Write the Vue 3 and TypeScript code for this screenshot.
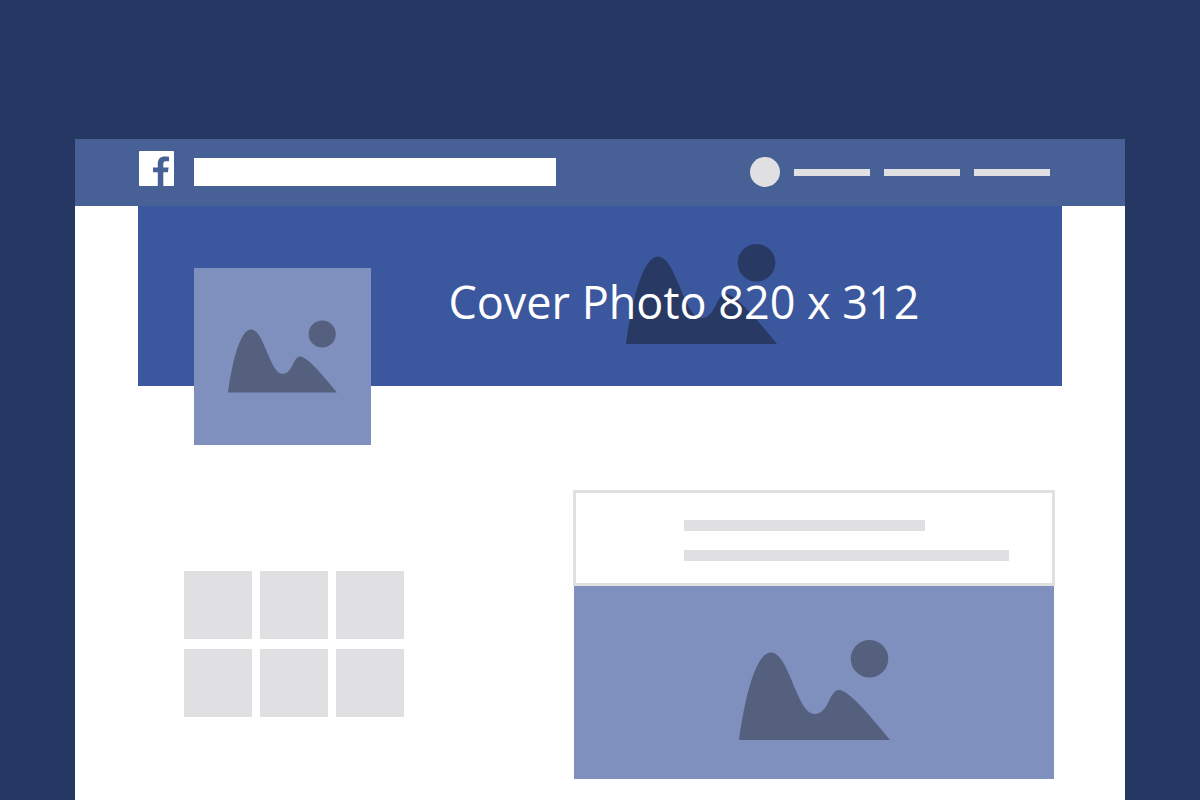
<script setup lang="ts">
import { defineComponent, h } from 'vue'

interface Line {
  id: string
  label: string
}

const links: Line[] = [
  { id: 'profile', label: 'Profile' },
  { id: 'home', label: 'Home' },
  { id: 'friends', label: 'Friends' },
]

const tiles: number[] = [1, 2, 3, 4, 5, 6]

// Placeholder landscape: two hills and a sun, filled with the current text colour.
const Landscape = defineComponent({
  render: () =>
    h('svg', { viewBox: '0 0 151 100', fill: 'currentColor', 'aria-hidden': 'true' }, [
      h('path', {
        d: 'M0 100C7 50 18 12.5 32 12.5C50 12.5 58 74 75.5 74C90 74 90 50 100 50C110 50 133 78 151 100Z',
      }),
      h('circle', { cx: 130.5, cy: 18.8, r: 18.8 }),
    ]),
})
</script>

<template>
  <div class="page">
    <div class="window">
      <header class="bar">
        <a class="logo" href="#" aria-label="Facebook">
          <svg viewBox="0 0 35 35" aria-hidden="true">
            <rect width="35" height="35" rx="1" fill="#fff" />
            <path
              d="M18.8 35V21.3H14V16.6H18.8V12.6C18.8 8 21.5 5.5 25.8 5.5C27.6 5.5 29.3 5.6 30 5.8V10.2H27C24.8 10.2 24.3 11.3 24.3 13V16.6H29.6L28.9 21.3H24.3V35Z"
              fill="#476096"
            />
          </svg>
        </a>
        <input class="search" type="search" aria-label="Search" />
        <nav class="nav">
          <span class="user"></span>
          <a v-for="link in links" :key="link.id" class="link" href="#" :aria-label="link.label"></a>
        </nav>
      </header>

      <section class="cover">
        <Landscape class="cover-art" />
        <h1 class="title">Cover Photo 820 x 312</h1>
      </section>

      <main class="body">
        <div class="side">
          <div class="avatar"><Landscape class="avatar-art" /></div>
          <div class="tiles">
            <div v-for="tile in tiles" :key="tile" class="tile"></div>
          </div>
        </div>
        <article class="post">
          <div class="post-text">
            <div class="text-line short"></div>
            <div class="text-line"></div>
          </div>
          <div class="post-media"><Landscape class="media-art" /></div>
        </article>
      </main>
    </div>
  </div>
</template>

<style>
body {
  margin: 0;
  background: #263763;
}
</style>

<style scoped>
.page {
  box-sizing: border-box;
  min-height: 100vh;
  display: flex;
  flex-direction: column;
  padding: 139px 75px 0;
  background: #263763;
  font-family: 'Open Sans', 'Noto Sans', sans-serif;
}
.window {
  flex: 1;
  background: #fff;
}
.bar {
  display: flex;
  align-items: center;
  height: 66px;
  padding: 0 75px 1px 64px;
  background: #476096;
}
.logo {
  flex: none;
  width: 35px;
  height: 35px;
  margin: 0 20px 7px 0;
}
.logo svg {
  display: block;
}
.search {
  box-sizing: border-box;
  flex: 0 1 362px;
  min-width: 0;
  height: 28px;
  margin: 0;
  padding: 0 8px;
  border: 0;
  border-radius: 0;
  background: #fff;
  font: 16px 'Open Sans', sans-serif;
  appearance: none;
}
.nav {
  display: flex;
  align-items: center;
  gap: 14px;
  margin-left: auto;
}
.user {
  width: 30px;
  height: 30px;
  border-radius: 50%;
  background: #e0e0e2;
}
.link {
  width: 76px;
  height: 7px;
  background: #e0e0e2;
}
.cover {
  position: relative;
  display: flex;
  align-items: center;
  justify-content: center;
  height: 180px;
  margin: 0 63px;
  padding-left: 168px;
  box-sizing: border-box;
  background: #3b579d;
}
.cover-art {
  position: absolute;
  left: calc(50% + 26px);
  bottom: 42px;
  width: 151px;
  height: 100px;
  color: #283964;
}
.title {
  position: relative;
  margin: 0;
  padding-top: 12px;
  color: #fff;
  font-size: 45px;
  font-weight: 400;
  line-height: 60px;
  white-space: nowrap;
}
.body {
  display: flex;
  justify-content: space-between;
  gap: 40px;
  padding: 0 70px 20px 109px;
}
.side {
  flex: none;
}
.avatar {
  position: relative;
  display: flex;
  align-items: center;
  justify-content: center;
  width: 177px;
  height: 177px;
  margin: -118px 0 0 10px;
  background: #7f90be;
}
.avatar-art {
  width: 109px;
  height: 73px;
  color: #555f7e;
}
.tiles {
  display: grid;
  grid-template-columns: repeat(3, 68px);
  gap: 10px 8px;
  margin-top: 126px;
}
.tile {
  height: 68px;
  background: #e0e0e2;
}
.post {
  flex: 0 1 482px;
  margin-top: 104px;
}
.post-text {
  display: flex;
  flex-direction: column;
  gap: 19px;
  padding: 27px 43px 22px 108px;
  border: 3px solid #e0e0e0;
}
.text-line {
  height: 11px;
  background: #e0e0e2;
}
.short {
  width: 74%;
}
.post-media {
  display: flex;
  justify-content: center;
  margin: 0 1px;
  padding: 54px 0 39px;
  background: #7f90be;
}
.media-art {
  width: 151px;
  height: 100px;
  color: #555f7e;
}
</style>
